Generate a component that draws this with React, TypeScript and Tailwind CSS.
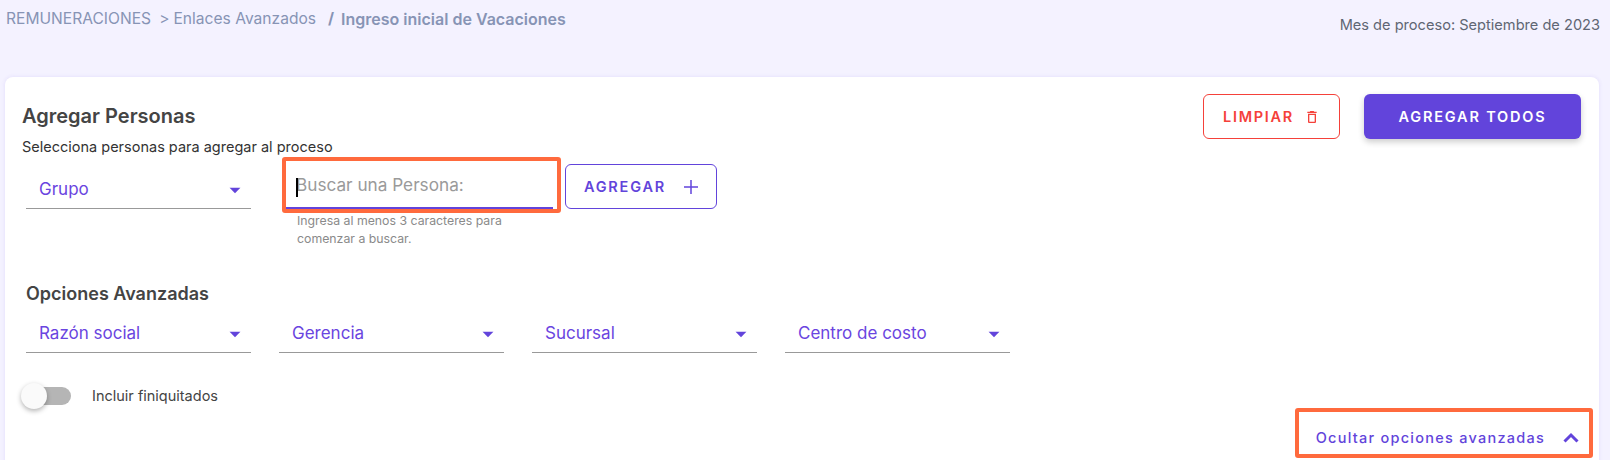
const ArrowDown = () => (
  <svg viewBox="0 0 24 24" className="w-[26px] h-[26px] fill-[#6244db]">
    <path d="M7 10l5 5 5-5z" />
  </svg>
)

const Select = ({ label }: { label: string }) => (
  <div className="w-[225px] h-[39px] shrink-0 flex items-center justify-between pl-[13px] pr-[3px] pt-[2px] border-b border-[#999999]">
    <span className="text-[17px] text-[#6a45e0]">{label}</span>
    <ArrowDown />
  </div>
)

export default function App() {
  return (
    <div className="relative w-full h-[460px] overflow-hidden bg-[#f4f2ff] font-['Inter',sans-serif]">
      <div className="h-[77px] flex justify-between items-start pl-[6px] pr-[10px] pt-[7px]">
        <div className="flex items-center text-[15.6px] text-[#8794b5]">
          <span>REMUNERACIONES</span>
          <span className="ml-[8px]">&gt;</span>
          <span className="ml-[4px]">Enlaces Avanzados</span>
          <span className="ml-[12px] font-bold">/</span>
          <span className="ml-[7px] text-[16px] font-semibold">Ingreso inicial de Vacaciones</span>
        </div>
        <span className="text-[14.6px] mt-[8px] text-[#5f6673]">Mes de proceso: Septiembre de 2023</span>
      </div>

      <div className="relative ml-[5px] mr-[11px] h-[400px] bg-white rounded-t-lg pt-[17px] pl-[17px] pr-[18px] shadow-[0_0_4px_rgba(98,68,219,0.12)]">
        <div className="h-[63px] flex justify-between items-start">
          <div className="pt-[10px]">
            <h2 className="text-[20px] leading-[24px] font-semibold text-[#444444]">Agregar Personas</h2>
            <p className="mt-[10px] text-[14.5px] leading-[18px] text-[#333333]">Selecciona personas para agregar al proceso</p>
          </div>
          <div className="flex gap-6">
            <button className="w-[137px] h-[45px] flex items-center justify-center gap-[10px] border border-[#f5413a] rounded-md bg-white text-[14.5px] font-semibold tracking-[1.7px] text-[#f5413a]">
              LIMPIAR
              <svg viewBox="0 0 24 24" className="w-4 h-4 fill-[#f5413a]">
                <path d="M6 19c0 1.1.9 2 2 2h8c1.1 0 2-.9 2-2V7H6v12zM8 9h8v10H8V9zm7.5-5l-1-1h-5l-1 1H5v2h14V4z" />
              </svg>
            </button>
            <button className="w-[217px] h-[45px] rounded-md bg-[#6244db] text-[14.5px] font-semibold tracking-[1.8px] text-white shadow-[0_3px_6px_rgba(0,0,0,0.2)]">
              AGREGAR TODOS
            </button>
          </div>
        </div>

        <div className="flex items-start pl-[4px]">
          <div className="mt-[13px]">
            <Select label="Grupo" />
          </div>
          <div className="relative w-[267px] ml-[35px]">
            <input
              placeholder="Buscar una Persona:"
              className="w-full h-[52px] pt-[9px] pb-[4px] pl-[10px] border-b-2 border-[#6244db] bg-white text-[17.2px] outline-none placeholder:text-[#9a9a9a]"
            />
            <span className="absolute left-[10px] top-[21px] w-[1.5px] h-[19px] bg-black" />
            <p className="mt-[3px] pl-[11px] w-[250px] text-[12.3px] leading-[18px] text-[#8a8a8a]">
              Ingresa al menos 3 caracteres para comenzar a buscar.
            </p>
          </div>
          <button className="mt-[7px] ml-[12px] w-[152px] h-[45px] flex items-center justify-center gap-[18px] border border-[#6244db] rounded-md text-[14.5px] font-semibold tracking-[1.8px] text-[#6244db]">
            AGREGAR
            <svg viewBox="0 0 14 14" className="w-[14px] h-[14px] stroke-[#6244db] stroke-[1.5]">
              <path d="M7 0v14M0 7h14" />
            </svg>
          </button>
        </div>

        <div className="pl-[4px] mt-[35px]">
          <h3 className="text-[18px] leading-[22px] font-semibold text-[#444444]">Opciones Avanzadas</h3>
          <div className="flex gap-[28px] mt-[9px]">
            <Select label="Razón social" />
            <Select label="Gerencia" />
            <Select label="Sucursal" />
            <Select label="Centro de costo" />
          </div>
        </div>

        <div className="flex items-center mt-[30px] pl-[1px]">
          <div className="relative w-[48px] h-[26px] flex items-center">
            <div className="ml-[10px] w-[38px] h-[18px] rounded-full bg-[#b5b5b5]" />
            <div className="absolute left-[-2px] top-0 w-[26px] h-[26px] rounded-full bg-[#fafafa] shadow-[0_2px_5px_rgba(0,0,0,0.3)]" />
          </div>
          <span className="ml-[21px] text-[14.5px] text-[#444444]">Incluir finiquitados</span>
        </div>

        <div className="absolute right-[20px] top-[350px] flex items-center gap-[18px] text-[14.5px] font-medium tracking-[1.25px] text-[#6244db]">
          Ocultar opciones avanzadas
          <svg viewBox="0 0 16 11" className="w-4 h-[11px] fill-none stroke-[#6244db] stroke-[3]">
            <path d="M1.5 9.5L8 3l6.500 6.500" />
          </svg>
        </div>
      </div>

      <div className="absolute left-[282px] top-[157px] w-[279px] h-[56px] border-4 border-[#ff6a3d] rounded-[3px] pointer-events-none" />
      <div className="absolute left-[1295px] top-[408px] w-[298px] h-[50px] border-4 border-[#ff6a3d] rounded-[3px] pointer-events-none" />
    </div>
  )
}
